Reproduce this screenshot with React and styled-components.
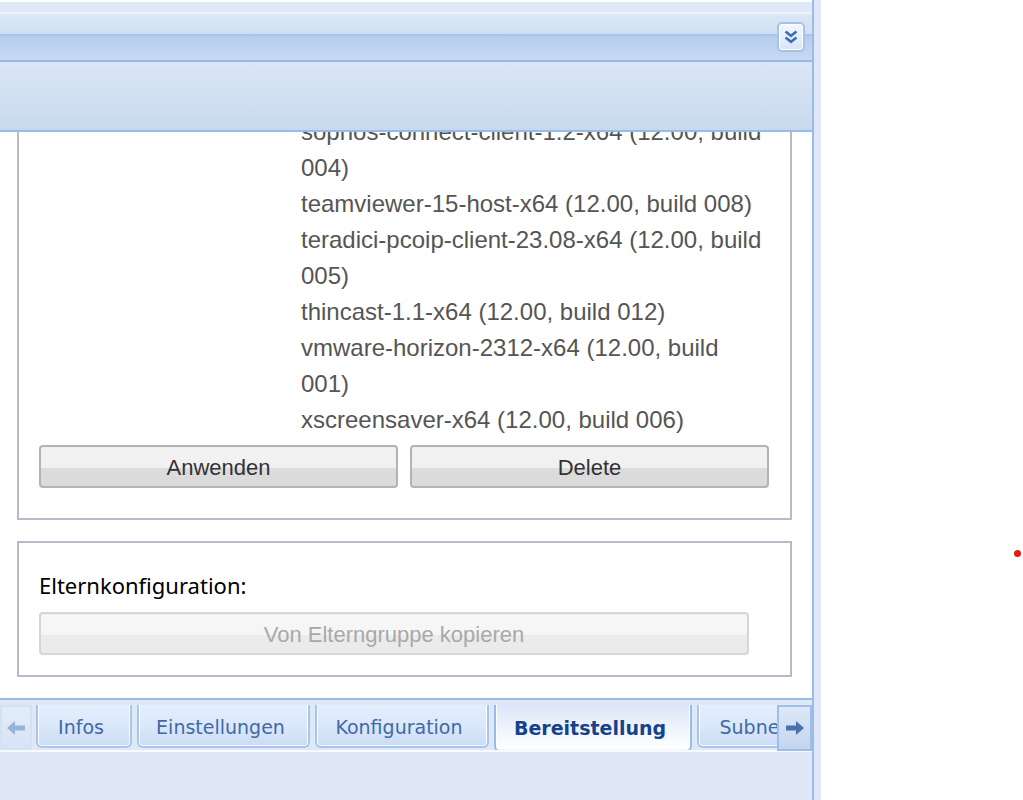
import React from 'react';
import styled, { createGlobalStyle } from 'styled-components';

const GlobalStyle = createGlobalStyle`
  html, body {
    margin: 0;
    padding: 0;
    height: 100%;
    overflow: hidden;
    background: #ffffff;
  }
  #root {
    height: 100%;
  }
`;

const packages = [
  'sophos-connect-client-1.2-x64 (12.00, build 004)',
  'teamviewer-15-host-x64 (12.00, build 008)',
  'teradici-pcoip-client-23.08-x64 (12.00, build 005)',
  'thincast-1.1-x64 (12.00, build 012)',
  'vmware-horizon-2312-x64 (12.00, build 001)',
  'xscreensaver-x64 (12.00, build 006)'
];

const tabs = [
  { label: 'Infos', width: 96 },
  { label: 'Einstellungen', width: 173 },
  { label: 'Konfiguration', width: 174 },
  { label: 'Bereitstellung', width: 198, active: true },
  { label: 'Subnetze', width: 140 }
];

const DoubleChevron = () => (
  <svg width="16" height="16" viewBox="0 0 16 16">
    <polyline points="2.5,2.5 8,6.8 13.5,2.5" fill="none" stroke="#3f6eb0" strokeWidth="2.6" />
    <polyline points="2.5,8.5 8,12.8 13.5,8.5" fill="none" stroke="#3f6eb0" strokeWidth="2.6" />
  </svg>
);

const BlockArrow = ({ dir, color }) => (
  <svg width="18" height="14" viewBox="0 0 18 14" style={dir === 'right' ? { transform: 'scaleX(-1)' } : undefined}>
    <polygon points="0,7 8,0 8,4.5 18,4.5 18,9.5 8,9.5 8,14" fill={color} />
  </svg>
);

export default function App() {
  return (
    <Page>
      <GlobalStyle />
      <Panel>
        <TopGap />
        <FrameTop />
        <TitleBar>
          <CollapseButton>
            <DoubleChevron />
          </CollapseButton>
        </TitleBar>
        <Toolbar />
        <ContentArea>
          <Scroller>
            <FieldSet>
              <PackageGrid>
                <div />
                <PackageList>
                  {packages.map(p => (
                    <li key={p}>{p}</li>
                  ))}
                </PackageList>
              </PackageGrid>
              <ButtonRow>
                <Button>Anwenden</Button>
                <Button>Delete</Button>
              </ButtonRow>
            </FieldSet>
            <FieldSet $compact>
              <FieldLabel>Elternkonfiguration:</FieldLabel>
              <Button disabled $width={710}>
                Von Elterngruppe kopieren
              </Button>
            </FieldSet>
          </Scroller>
        </ContentArea>
        <TabBar>
          <TabRow>
            <Scroll $side="left">
              <BlockArrow dir="left" color="#98b3da" />
            </Scroll>
            <TabStrip>
              {tabs.map(t => (
                <Tab key={t.label} $width={t.width} $active={t.active}>
                  {t.label}
                </Tab>
              ))}
            </TabStrip>
            <Scroll $side="right">
              <BlockArrow dir="right" color="#4a71a8" />
            </Scroll>
          </TabRow>
          <TabFooter />
        </TabBar>
      </Panel>
      <FrameEdge />
      <Outside>
        <Dot />
      </Outside>
    </Page>
  );
}

const Page = styled.div`
  display: flex;
  height: 800px;
  width: 1023px;
`;

const Panel = styled.div`
  width: 812px;
  display: flex;
  flex-direction: column;
  background: #ffffff;
`;

const TopGap = styled.div`
  height: 2px;
  background: #ffffff;
`;

const FrameTop = styled.div`
  height: 10px;
  background: #dfe8f6;
`;

const TitleBar = styled.div`
  height: 46px;
  border-top: 2px solid #eef3fb;
  border-bottom: 2px solid #99bbe8;
  background: linear-gradient(
    to bottom,
    #dce7f6 0,
    #cfdff3 20px,
    #a9c4ea 20px,
    #a9c4ea 22px,
    #b5cdee 22px,
    #c7d9f2 46px
  );
  display: flex;
  align-items: center;
  justify-content: flex-end;
  padding-right: 7px;
`;

const CollapseButton = styled.div`
  width: 24px;
  height: 26px;
  border: 2px solid #a6c2ea;
  border-radius: 5px;
  background: linear-gradient(to bottom, #f3f7fd, #d9e6f7);
  display: flex;
  align-items: center;
  justify-content: center;
  box-shadow: inset 0 0 0 1px #ffffff;
`;

const Toolbar = styled.div`
  height: 68px;
  border-bottom: 2px solid #99bbe8;
  background: linear-gradient(to bottom, #dbe6f5, #c8d9ee);
`;

const ContentArea = styled.div`
  flex: 1;
  overflow: hidden;
  background: #ffffff;
`;

const Scroller = styled.div`
  margin-top: -40px;
`;

const FieldSet = styled.div`
  margin: ${p => (p.$compact ? '21px' : '0')} 20px 0 17px;
  border: 2px solid #b7bac9;
  padding: ${p => (p.$compact ? '27px 21px 20px 20px' : '20px 21px 30px 20px')};
`;

const PackageGrid = styled.div`
  display: grid;
  grid-template-columns: 262px 467px;
`;

const PackageList = styled.ul`
  list-style: none;
  margin: 0;
  padding: 0;
  font-family: 'Liberation Sans', Arial, sans-serif;
  font-size: 24px;
  line-height: 36px;
  color: #555555;
`;

const ButtonRow = styled.div`
  margin-top: 7px;
  display: grid;
  grid-template-columns: 1fr 1fr;
  gap: 12px;
`;

const Button = styled.button`
  display: block;
  width: ${p => (p.$width ? `${p.$width}px` : '100%')};
  height: 43px;
  padding: 0;
  border: 2px solid ${p => (p.disabled ? '#d6d6d6' : '#b3b3b3')};
  border-radius: 4px;
  background: ${p =>
    p.disabled
      ? 'linear-gradient(to bottom, #f7f7f7 0, #f5f5f5 55%, #ebebeb 55%, #ebebeb 100%)'
      : 'linear-gradient(to bottom, #f3f3f3 0, #f0f0f0 55%, #dcdcdc 55%, #dadada 100%)'};
  box-shadow: inset 0 1px 0 #e9eef7;
  font-family: 'Liberation Sans', Arial, sans-serif;
  font-size: 22px;
  padding-top: 2px;
  color: ${p => (p.disabled ? '#a9a9a9' : '#333333')};
`;

const FieldLabel = styled.div`
  font-family: 'Noto Sans', sans-serif;
  font-size: 22px;
  line-height: 30px;
  color: #000000;
  margin-bottom: 12px;
`;

const TabBar = styled.div`
  height: 100px;
  border-top: 2px solid #99bbe8;
  background: #dfe8f6;
  display: flex;
  flex-direction: column;
`;

const TabRow = styled.div`
  display: flex;
  align-items: flex-start;
  padding-top: 5px;
  height: 45px;
  border-bottom: 2px solid #f6f9fd;
`;

const Scroll = styled.div`
  flex: none;
  width: ${p => (p.$side === 'left' ? '28px' : '31px')};
  height: ${p => (p.$side === 'left' ? '41px' : '42px')};
  margin-right: ${p => (p.$side === 'left' ? '4px' : '0')};
  border: 2px solid ${p => (p.$side === 'left' ? '#d3e1f4' : '#9fbde6')};
  background: ${p =>
    p.$side === 'left'
      ? 'linear-gradient(to bottom, #e3ecf9, #d7e4f5)'
      : 'linear-gradient(to bottom, #dde8f7, #c3d6f0)'};
  display: flex;
  align-items: center;
  justify-content: center;
`;

const TabStrip = styled.div`
  flex: 1;
  display: flex;
  gap: 5px;
  overflow: hidden;
  align-items: flex-start;
`;

const Tab = styled.div`
  flex: none;
  box-sizing: border-box;
  width: ${p => p.$width}px;
  height: ${p => (p.$active ? '47px' : '43px')};
  padding: ${p => (p.$active ? '0 6px 0 0' : '3px 6px 0 0')};
  border: 2px solid ${p => (p.$active ? '#99bbe8' : '#a9c5ec')};
  border-top: none;
  border-radius: 0 0 6px 6px;
  background: ${p =>
    p.$active
      ? 'linear-gradient(to bottom, #dae6f8 0, #eef4fc 50%, #ffffff 100%)'
      : 'linear-gradient(to bottom, #e4eefc 0, #dbe8fa 50%, #cadcf5 100%)'};
  box-shadow: inset 1px 0 0 #ffffff, inset -1px 0 0 #ffffff, inset 0 -1px 0 #f3f7fd;
  display: flex;
  align-items: center;
  justify-content: center;
  font-family: 'DejaVu Sans', Verdana, sans-serif;
  font-size: 19px;
  font-weight: ${p => (p.$active ? 700 : 400)};
  color: ${p => (p.$active ? '#15428b' : '#4169a6')};
  white-space: nowrap;
  overflow: hidden;
  margin-bottom: ${p => (p.$active ? '-2px' : '0')};
`;

const TabFooter = styled.div`
  flex: 1;
  background: #dfe8f6;
`;

const FrameEdge = styled.div`
  width: 7px;
  border-left: 2px solid #99bbe8;
  background: #dfe8f6;
`;

const Outside = styled.div`
  flex: 1;
  background: #ffffff;
`;

const Dot = styled.div`
  width: 7px;
  height: 7px;
  border-radius: 50%;
  background: #e21b1b;
  margin: 550px 0 0 193px;
`;
